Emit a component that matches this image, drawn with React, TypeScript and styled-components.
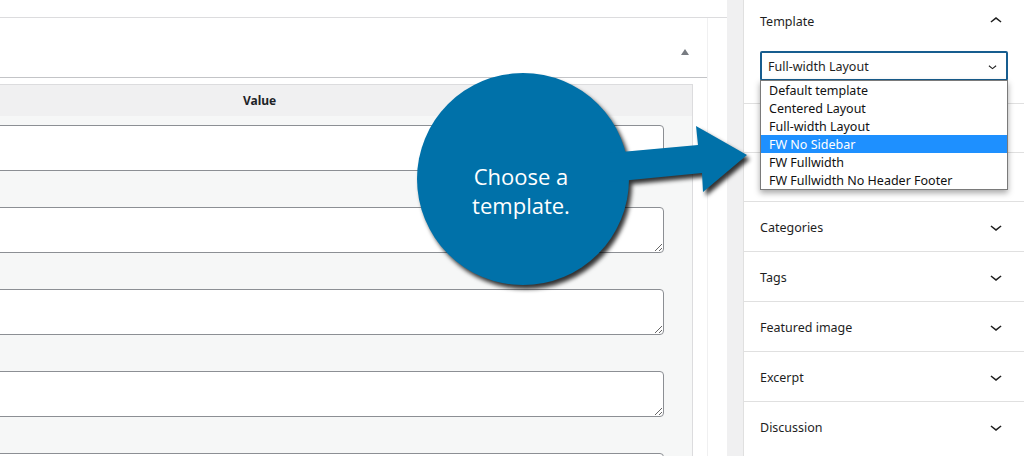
import React from 'react';
import styled, { createGlobalStyle } from 'styled-components';

const Global = createGlobalStyle`
  html, body { margin: 0; padding: 0; background: #fff; }
  body { font-family: "Noto Sans", "Open Sans", sans-serif; color: #1e1e1e; }
  * { box-sizing: border-box; }
`;

const Page = styled.div`
  position: relative;
  display: flex;
  width: 1024px;
  height: 456px;
  overflow: hidden;
  background: #fff;
`;

const Main = styled.main`
  width: 727px;
  flex: none;
  overflow: hidden;
  background: #fff;
`;

const TopBar = styled.div`
  height: 18px;
  border-bottom: 1px solid #dcdcde;
`;

const Postbox = styled.section`
  width: 708px;
  border-right: 1px solid #f0f0f1;
  height: 100%;
`;

const PostboxHeader = styled.div`
  height: 60px;
  border-bottom: 1px solid #c3c4c7;
  display: flex;
  justify-content: flex-end;
  align-items: flex-start;
  padding: 31px 18px 0 0;
`;

const ToggleArrow = styled.span`
  width: 0;
  height: 0;
  border-left: 4px solid transparent;
  border-right: 4px solid transparent;
  border-bottom: 6px solid #787c82;
`;

const PostboxBody = styled.div`
  padding: 6px 14px 0 0;
`;

const Table = styled.div`
  margin-left: -40px;
  border-top: 1px solid #dcdcde;
  border-right: 1px solid #dcdcde;
`;

const TableHead = styled.div`
  height: 31px;
  background: #f0f0f1;
  display: flex;
  align-items: center;
  padding-left: 283px;
  font-size: 12px;
  font-weight: 700;
  color: #1d2327;
`;

const TableBody = styled.div`
  background: #f6f7f7;
  padding: 9px 28px 0 20px;
  display: flex;
  flex-direction: column;
  gap: 36px;
`;

const Field = styled.textarea`
  display: block;
  width: 100%;
  height: 46px;
  border: 1px solid #8c8f94;
  border-radius: 4px;
  background: #fff;
  font: inherit;
  outline: none;
`;

const Band = styled.div`
  width: 16px;
  flex: none;
  background: #f0f0f1;
`;

const Sidebar = styled.aside`
  width: 281px;
  flex: none;
  border-left: 1px solid #e0e0e0;
  background: #fff;
  font-size: 12.5px;
`;

const Panel = styled.div<{ $h: number }>`
  position: relative;
  height: ${p => p.$h}px;
  border-bottom: 1px solid #e0e0e0;
  padding: 0 16px;
  &:last-child {
    border-bottom: none;
  }
`;

const PanelTitle = styled.div<{ $h: number }>`
  height: ${p => p.$h}px;
  display: flex;
  align-items: center;
  justify-content: space-between;
  color: #1e1e1e;
`;

const TitleText = styled.span`
  padding-top: 2px;
`;

const Chevron = styled.svg<{ $up?: boolean; $size?: number }>`
  width: ${p => p.$size ?? 24}px;
  height: ${p => p.$size ?? 24}px;
  flex: none;
  transform: ${p => (p.$up ? 'rotate(180deg)' : 'none')};
  fill: #1e1e1e;
`;

const Select = styled.div`
  margin-top: 10px;
  height: 30px;
  border: 2px solid #175d8f;
  border-radius: 2px;
  display: flex;
  align-items: center;
  justify-content: space-between;
  padding: 0 5px 0 6px;
  color: #1e1e1e;
`;

const Dropdown = styled.ul`
  position: absolute;
  top: 80px;
  left: 16px;
  width: 248px;
  margin: 0;
  padding: 0;
  list-style: none;
  border: 1px solid #7a7a7a;
  background: #fff;
  box-shadow: 0 3px 6px rgba(0, 0, 0, 0.35);
  z-index: 2;
`;

const Option = styled.li<{ $selected?: boolean }>`
  height: 18px;
  line-height: 16px;
  padding: 2px 0 0 8px;
  white-space: nowrap;
  background: ${p => (p.$selected ? '#1e90ff' : '#fff')};
  color: ${p => (p.$selected ? '#fff' : '#111')};
`;

const Callout = styled.div`
  position: absolute;
  left: 400px;
  top: 60px;
  width: 370px;
  height: 250px;
  z-index: 5;
  pointer-events: none;
`;

const CalloutShape = styled.svg`
  position: absolute;
  inset: 0;
  overflow: visible;
  filter: drop-shadow(3px 4px 2px rgba(0, 0, 0, 0.8));
`;

const CalloutText = styled.div`
  position: absolute;
  left: 15px;
  top: 102px;
  width: 212px;
  text-align: center;
  font-family: "Open Sans", "Noto Sans", sans-serif;
  font-size: 22px;
  line-height: 29px;
  color: #fff;
`;

const ChevronIcon = ({ up, size }: { up?: boolean; size?: number }) => (
  <Chevron $up={up} $size={size} viewBox="0 0 24 24" aria-hidden>
    <path d="M17.5 11.6L12 16l-5.5-4.4.9-1.2L12 14l4.6-3.6 1 1.2z" />
  </Chevron>
);

const templates = [
  'Default template',
  'Centered Layout',
  'Full-width Layout',
  'FW No Sidebar',
  'FW Fullwidth',
  'FW Fullwidth No Header Footer',
];

const sections = ['Categories', 'Tags', 'Featured image', 'Excerpt', 'Discussion'];

export default function App() {
  return (
    <Page>
      <Global />
      <Main>
        <TopBar />
        <Postbox>
          <PostboxHeader>
            <ToggleArrow />
          </PostboxHeader>
          <PostboxBody>
            <Table>
              <TableHead>Value</TableHead>
              <TableBody>
                {[0, 1, 2, 3, 4].map(i => (
                  <Field key={i} />
                ))}
              </TableBody>
            </Table>
          </PostboxBody>
        </Postbox>
      </Main>
      <Band />
      <Sidebar>
        <Panel $h={104}>
          <PanelTitle $h={41}>
            <TitleText>Template</TitleText>
            <ChevronIcon up />
          </PanelTitle>
          <Select>
            <span>Full-width Layout</span>
            <ChevronIcon size={17} />
          </Select>
          <Dropdown>
            {templates.map(t => (
              <Option key={t} $selected={t === 'FW No Sidebar'}>
                {t}
              </Option>
            ))}
          </Dropdown>
        </Panel>
        <Panel $h={49} />
        <Panel $h={49} />
        {sections.map(s => (
          <Panel key={s} $h={50}>
            <PanelTitle $h={49}>
              <TitleText>{s}</TitleText>
              <ChevronIcon />
            </PanelTitle>
          </Panel>
        ))}
      </Sidebar>
      <Callout>
        <CalloutShape viewBox="400 60 370 250" width="370" height="250">
          <circle cx="523" cy="179" r="106" fill="#0071a9" />
          <polygon
            points="610,153 698,145 696,126 747,155 703,192 702,173 610,182"
            fill="#0071a9"
          />
        </CalloutShape>
        <CalloutText>
          Choose a
          <br />
          template.
        </CalloutText>
      </Callout>
    </Page>
  );
}
